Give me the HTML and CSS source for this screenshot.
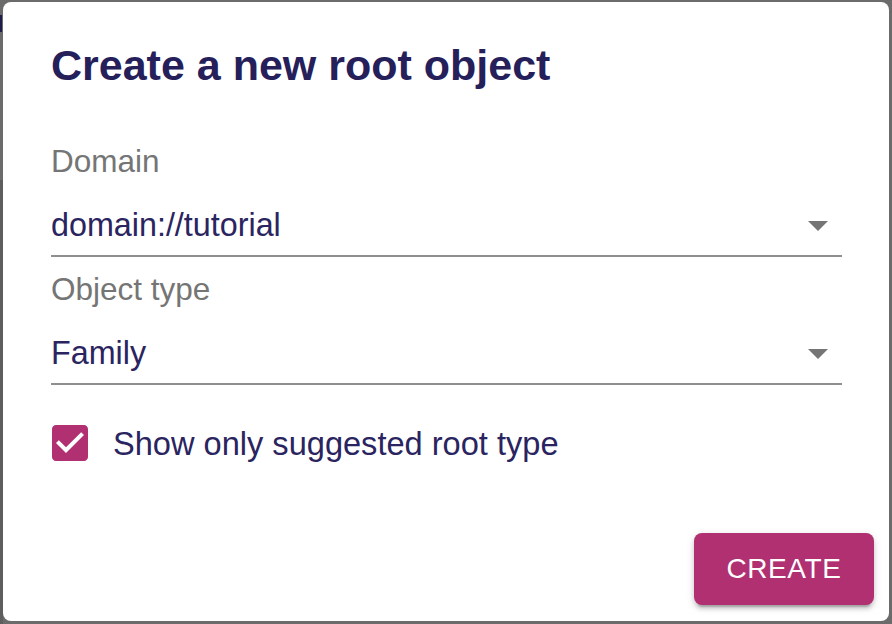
FILE: index.html
```html
<!DOCTYPE html>
<html lang="en">
<head>
<meta charset="utf-8">
<title>Create a new root object</title>
<link rel="stylesheet" href="styles.css">
</head>
<body>
  <div class="dialog">
    <h1 class="title">Create a new root object</h1>
    <div class="field">
      <div class="label">Domain</div>
      <div class="select">
        <span class="value">domain://tutorial</span>
        <svg class="arrow" viewBox="0 0 24 24" width="48" height="48"><path d="M7 10l5 5 5-5z"/></svg>
      </div>
    </div>
    <div class="field">
      <div class="label">Object type</div>
      <div class="select">
        <span class="value">Family</span>
        <svg class="arrow" viewBox="0 0 24 24" width="48" height="48"><path d="M7 10l5 5 5-5z"/></svg>
      </div>
    </div>
    <label class="check-row">
      <svg class="checkbox" viewBox="0 0 24 24" width="48" height="48"><path d="M19 3H5c-1.11 0-2 .9-2 2v14c0 1.1.89 2 2 2h14c1.11 0 2-.9 2-2V5c0-1.1-.89-2-2-2zm-9 14l-5-5 1.41-1.41L10 14.17l7.59-7.59L19 8l-9 9z"/></svg>
      <span class="check-text">Show only suggested root type</span>
    </label>
    <div class="actions">
      <button class="btn">CREATE</button>
    </div>
  </div>
</body>
</html>
```

FILE: styles.css
```css
html, body {
  margin: 0;
  padding: 0;
}
body {
  width: 892px;
  height: 624px;
  overflow: hidden;
  font-family: "Liberation Sans", Arial, sans-serif;
  background:
    linear-gradient(#1f1c48, #1f1c48) 0 15px / 2px 17px no-repeat,
    linear-gradient(#5e5e5e, #5e5e5e) 0 180px / 3px 100% no-repeat,
    #6b6b6b;
  padding: 2px 3px 3px 3px;
  box-sizing: border-box;
}
.dialog {
  width: 886px;
  height: 619px;
  box-sizing: border-box;
  background: #fff;
  border-radius: 8px;
  padding: 37px 47px 16px 48px;
  display: flex;
  flex-direction: column;
}
.title {
  margin: 0;
  font-size: 43px;
  line-height: 52px;
  font-weight: 700;
  color: #25205a;
}
.field {
  display: flex;
  flex-direction: column;
  margin-top: 50px;
}
.field + .field {
  margin-top: 12px;
}
.label {
  font-size: 31.5px;
  line-height: 40px;
  color: #757575;
}
.select {
  margin-top: 24px;
  display: flex;
  justify-content: space-between;
  align-items: flex-start;
  height: 40px;
  padding-bottom: 10px;
  border-bottom: 2px solid #8f8f8f;
}
.value {
  font-size: 32.3px;
  line-height: 40px;
  color: #2a2460;
}
.arrow {
  fill: #757575;
  margin-top: -4px;
  flex: none;
}
.check-row {
  display: flex;
  align-items: center;
  margin-top: 34px;
  margin-left: -5px;
  height: 48px;
}
.checkbox {
  fill: #b03072;
  flex: none;
}
.check-text {
  margin-left: 19px;
  margin-top: 1px;
  font-size: 32.6px;
  line-height: 40px;
  color: #2a2460;
}
.actions {
  margin-top: auto;
  display: flex;
  justify-content: flex-end;
  margin-right: -32px;
}
.btn {
  width: 180px;
  height: 72px;
  border: none;
  border-radius: 8px;
  background: #b03072;
  color: #fff;
  font-family: "Liberation Sans", Arial, sans-serif;
  font-size: 28px;
  letter-spacing: 0.6px;
  font-weight: 400;
  padding: 0;
  box-shadow: 0 6px 2px -4px rgba(0,0,0,.2), 0 4px 4px rgba(0,0,0,.14), 0 2px 10px rgba(0,0,0,.12);
}
```
